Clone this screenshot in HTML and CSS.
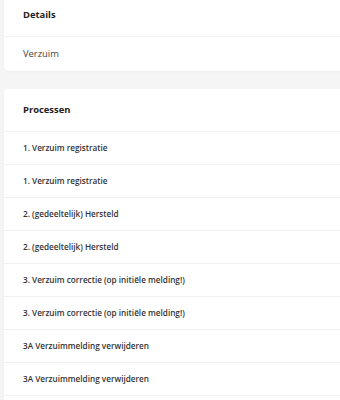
FILE: index.html
```html
<!DOCTYPE html>
<html lang="nl">
<head>
    <meta charset="UTF-8">
    <meta name="viewport" content="width=device-width, initial-scale=1.0">
    <title>Verzuim</title>
    <link rel="stylesheet" href="styles.css">
</head>
<body>
    <div class="page">
        <div class="card">
            <div class="card-header">Details</div>
            <div class="card-body">Verzuim</div>
        </div>

        <div class="card card-long">
            <div class="card-header">Processen</div>
            <ul class="process-list">
                <li>1. Verzuim registratie</li>
                <li>1. Verzuim registratie</li>
                <li>2. (gedeeltelijk) Hersteld</li>
                <li>2. (gedeeltelijk) Hersteld</li>
                <li>3. Verzuim correctie (op initiële melding!)</li>
                <li>3. Verzuim correctie (op initiële melding!)</li>
                <li>3A Verzuimmelding verwijderen</li>
                <li>3A Verzuimmelding verwijderen</li>
            </ul>
        </div>
    </div>
</body>
</html>
```

FILE: styles.css
```css
body {
    font-family: "Open Sans", Arial, sans-serif;
    margin: 0;
    padding: 0;
    background-color: #f5f5f5;
    color: #333;
    overflow: hidden;
}
.page {
    margin-top: -6px;
    padding-left: 4px;
    display: flex;
    flex-direction: column;
    gap: 18px;
}
.card {
    width: 360px;
    background-color: #fff;
    border-radius: 5px;
    box-shadow: 0 1px 2px rgba(0, 0, 0, 0.04);
}
.card-long {
    padding-bottom: 40px;
}
.card-header {
    height: 42px;
    line-height: 42px;
    padding-left: 19px;
    font-size: 9.4px;
    font-weight: bold;
    color: #222;
    border-bottom: 1px solid #f0f0f0;
}
.card-body {
    height: 34px;
    line-height: 34px;
    padding-left: 19px;
    font-size: 9.4px;
    color: #444;
}
.process-list {
    list-style: none;
    margin: 0;
    padding: 0;
}
.process-list li {
    height: 32px;
    line-height: 32px;
    padding-left: 19px;
    font-size: 8.2px;
    font-weight: 600;
    color: #333;
    border-bottom: 1px solid #f0f0f0;
}
```
